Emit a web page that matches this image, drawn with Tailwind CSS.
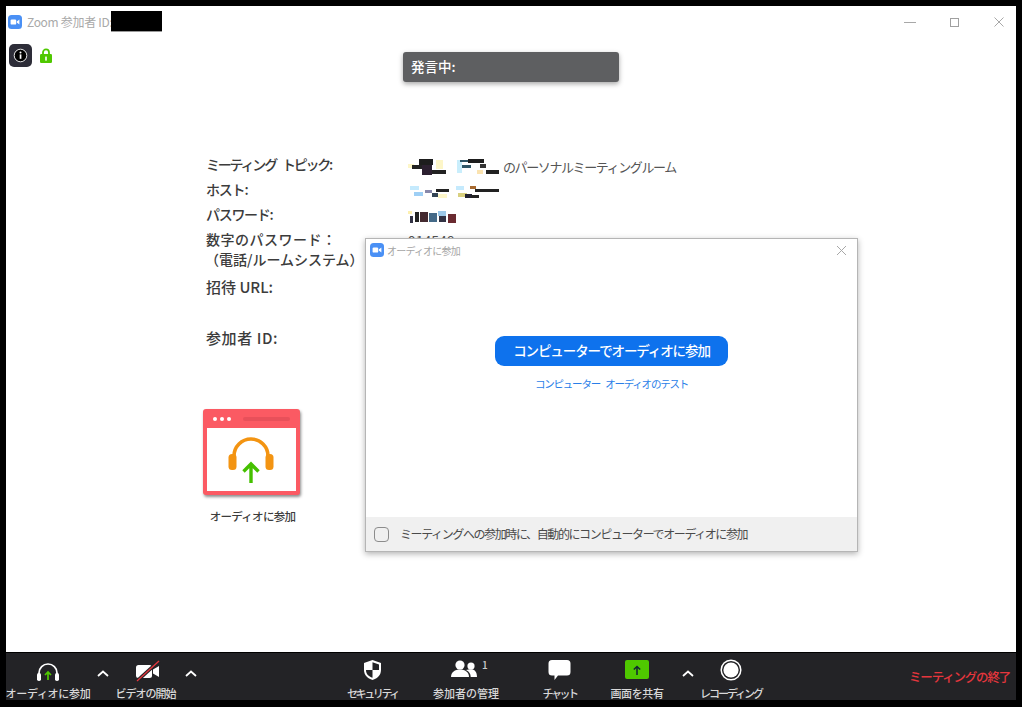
<!DOCTYPE html>
<html lang="ja">
<head>
<meta charset="UTF-8">
<title>Zoom 参加者</title>
<script src="https://cdn.jsdelivr.net/npm/@tailwindcss/browser@4"></script>
</head>
<body class="bg-black w-[1022px] h-[707px] overflow-hidden font-['Noto_Sans_CJK_JP','Noto_Sans',sans-serif]">
<div class="relative pt-[6px] px-[6px] pb-[7px] h-[707px] flex flex-col">

  <!-- main window -->
  <div class="bg-white h-[646px] shrink-0 flex flex-col">
    <!-- title bar -->
    <div class="h-[32px] shrink-0 flex items-center pl-[2px] pr-[11px]">
      <svg class="w-[14px] h-[14px] mr-[5px]" viewBox="0 0 14 14"><rect width="14" height="14" rx="3.5" fill="#4a90f5"/><rect x="2.6" y="4.4" width="5.6" height="5.2" rx="1.2" fill="#fff"/><path d="M8.8 6.4 11.4 4.6V9.4L8.8 7.6Z" fill="#fff"/></svg>
      <span class="text-[12px] tracking-[-0.3px] text-[#a9a9a9] w-[83px] whitespace-nowrap">Zoom 参加者 ID:</span>
      <span class="w-[51px] h-[21px] bg-black ml-[1px] mt-[-1px] border-b border-[#999]"></span>
      <div class="ml-auto flex items-center gap-[34px]">
        <span class="w-[12px] h-px bg-[#a8a8a8]"></span>
        <span class="w-[9px] h-[9px] border border-[#a0a0a0]"></span>
        <svg class="w-[12px] h-[12px]" viewBox="0 0 12 12" fill="none" stroke="#a8a8a8"><path d="M1.5 1.5 10.5 10.5M10.5 1.5 1.5 10.5"/></svg>
      </div>
    </div>

    <!-- status icons -->
    <div class="flex items-center pl-[3px] gap-[8px] mt-[5px] h-[24px]">
      <div class="w-[23px] h-[23px] rounded-[5px] bg-[#2d2d38] flex items-center justify-center">
        <svg class="w-[15px] h-[15px]" viewBox="0 0 15 15"><circle cx="7.5" cy="7.5" r="6.3" fill="#000" stroke="#e8e8e8" stroke-width="1"/><rect x="6.7" y="6.4" width="1.7" height="4.4" fill="#fff"/><circle cx="7.5" cy="4.6" r="1" fill="#fff"/></svg>
      </div>
      <svg class="w-[12px] h-[15px]" viewBox="0 0 12 15"><path d="M3 7V4.4a3 3 0 0 1 6 0V7" fill="none" stroke="#4fc800" stroke-width="1.8"/><rect y="6" width="12" height="9" rx="1.2" fill="#4fc800"/><rect x="5" y="8.6" width="2" height="4" fill="#dff5cf"/></svg>
    </div>

    <!-- meeting info -->
    <div class="mt-[87px] ml-[200px] grid grid-cols-[202px_1fr] text-[14px] leading-[20px] text-[#3c3c3c] whitespace-nowrap">
      <div class="font-medium h-[25px] tracking-[-2.2px] [word-spacing:5px]">ミーティング トピック:</div>
      <div class="flex items-center h-[25px] gap-[3px]">
        <svg class="w-[92px] h-[16px] blur-[0.4px]" viewBox="0 0 92 16">
          <rect x="0" y="5" width="6" height="4" fill="#fdf6c8"/><rect x="4" y="6" width="10" height="4" fill="#222"/><rect x="11" y="0" width="14" height="6" fill="#1d1d1d"/><rect x="14" y="6" width="10" height="10" fill="#2c2030"/><rect x="24" y="11" width="14" height="4" fill="#222"/><rect x="28" y="1" width="7" height="9" fill="#fdf6c8"/>
          <rect x="49" y="1" width="5" height="13" fill="#c9eefc"/><rect x="52" y="1" width="8" height="2" fill="#2d5566"/><rect x="54" y="6" width="9" height="3" fill="#2d5566"/><rect x="60" y="0" width="16" height="4" fill="#1d1d1d"/><rect x="72" y="5" width="6" height="4" fill="#333"/><rect x="78" y="11" width="13" height="4" fill="#222"/><rect x="69" y="11" width="6" height="4" fill="#fbe3b0"/>
        </svg>
        <span class="text-[13px] tracking-[-1.4px] text-[#555]">のパーソナルミーティングルーム</span>
      </div>
      <div class="font-medium h-[25px] tracking-[-1.2px]">ホスト:</div>
      <div class="h-[25px] pt-[5px]">
        <svg class="w-[92px] h-[16px] blur-[0.4px]" viewBox="0 0 92 16">
          <rect x="2" y="2" width="9" height="4" fill="#c5eafd"/><rect x="6" y="8" width="9" height="4" fill="#9ecff5"/><rect x="17" y="6" width="7" height="3" fill="#88a"/><rect x="24" y="9" width="6" height="4" fill="#345"/><rect x="28" y="5" width="13" height="3" fill="#222"/><rect x="30" y="10" width="9" height="4" fill="#fdf6c8"/><rect x="48" y="2" width="8" height="4" fill="#c5eafd"/><rect x="50" y="9" width="9" height="4" fill="#d9d080"/><rect x="57" y="10" width="7" height="4" fill="#223"/><rect x="62" y="2" width="6" height="3" fill="#a86a30"/><rect x="67" y="5" width="24" height="3" fill="#222"/><rect x="63" y="11" width="8" height="3" fill="#222"/>
        </svg>
      </div>
      <div class="font-medium h-[25px] tracking-[-1.3px]">パスワード:</div>
      <div class="h-[25px] pt-[5px]">
        <svg class="w-[50px] h-[16px] blur-[0.4px]" viewBox="0 0 50 16">
          <rect x="0" y="2" width="4" height="3" fill="#fdf0b0"/><rect x="2" y="7" width="3" height="7" fill="#334"/><rect x="7" y="3" width="4" height="10" fill="#222"/><rect x="12" y="3" width="8" height="10" fill="#442a30"/><rect x="21" y="4" width="8" height="9" fill="#456a88"/><rect x="30" y="2" width="8" height="5" fill="#9cc8e8"/><rect x="31" y="7" width="7" height="6" fill="#334"/><rect x="40" y="5" width="8" height="9" fill="#6a2a30"/>
        </svg>
      </div>
      <div class="font-medium h-[48px]"><span class="tracking-[0.5px]">数字のパスワード：</span><br><span class="-ml-[1px]">（電話/ルームシステム）</span></div>
      <div class="text-[#555] h-[48px] pt-[2px]">914548</div>
      <div class="font-medium h-[51px] text-[15px]">招待 URL:</div>
      <div class="h-[51px]"></div>
      <div class="font-medium h-[81px] text-[15px] tracking-[0.6px]">参加者 ID:</div>
      <div class="h-[81px]"></div>
    </div>

    <!-- join audio tile -->
    <div class="ml-[190px] w-[110px] flex flex-col items-center">
      <div class="w-[97px] h-[86px] rounded-[3px] bg-[#fb5a63] shadow-[1px_2px_3px_rgba(0,0,0,0.45)] flex flex-col p-[4px] pt-0">
        <div class="h-[19px] flex items-center gap-[3px] pl-[6px]">
          <span class="w-[4px] h-[4px] rounded-full bg-white"></span>
          <span class="w-[4px] h-[4px] rounded-full bg-white"></span>
          <span class="w-[4px] h-[4px] rounded-full bg-white"></span>
          <span class="ml-[9px] w-[47px] h-[4px] rounded-full bg-[#e8505a]"></span>
        </div>
        <div class="flex-1 bg-white flex justify-center items-center">
          <svg class="w-[46px] h-[48px] mt-[1px]" viewBox="0 0 46 48" fill="none">
            <path d="M6 24V20a17 17 0 0 1 34 0v4" stroke="#f39412" stroke-width="3.6"/>
            <rect x="0.5" y="18" width="8" height="16" rx="3.5" fill="#f39412"/>
            <rect x="37.5" y="18" width="8" height="16" rx="3.5" fill="#f39412"/>
            <path d="M23 47V29M15.5 35.5 23 28l7.500 7.500" stroke="#45c000" stroke-width="3.4"/>
          </svg>
        </div>
      </div>
      <div class="mt-[12px] text-[11.5px] tracking-[-0.7px] leading-[18px] font-medium text-[#3c3c3c] whitespace-nowrap ml-[3px]">オーディオに参加</div>
    </div>
  </div>

  <!-- speaking indicator -->
  <div class="absolute left-[403px] top-[52px] w-[216px] h-[30px] rounded-[3px] bg-[#5e5f61] shadow-[0_2px_5px_rgba(0,0,0,0.35)] flex items-center pl-[8px] pb-[1px] text-[13.5px] font-medium text-white">発言中:</div>

  <!-- audio dialog -->
  <div class="absolute left-[365px] top-[238px] w-[493px] h-[314px] bg-white border border-[#b5b5b5] shadow-[0_2px_6px_rgba(0,0,0,0.3)] flex flex-col whitespace-nowrap">
    <div class="h-[22px] shrink-0 flex items-center pl-[4px] pr-[10px]">
      <svg class="w-[14px] h-[14px] mr-[3px]" viewBox="0 0 14 14"><rect width="14" height="14" rx="3.5" fill="#4a90f5"/><rect x="2.6" y="4.400" width="5.6" height="5.2" rx="1.2" fill="#fff"/><path d="M8.8 6.4 11.4 4.6V9.4L8.8 7.6Z" fill="#fff"/></svg>
      <span class="text-[10px] tracking-[-0.8px] text-[#a5a5a5]">オーディオに参加</span>
      <svg class="w-[11px] h-[11px] ml-auto" viewBox="0 0 11 11" fill="none" stroke="#a8a8a8"><path d="M1 1 10 10M10 1 1 10"/></svg>
    </div>
    <div class="flex-1 flex flex-col items-center pt-[75px]">
      <div class="w-[233px] h-[30px] rounded-[9px] bg-[#0e72ed] text-white text-[13.5px] tracking-[-1.1px] font-medium flex items-center justify-center pb-[2px]">コンピューターでオーディオに参加</div>
      <div class="mt-[10px] text-[10.5px] tracking-[-1.2px] [word-spacing:4px] leading-[16px] text-[#2a7ee8]">コンピューター オーディオのテスト</div>
    </div>
    <div class="h-[34px] shrink-0 bg-[#f0f0f0] flex items-center pl-[8px] text-[12px] tracking-[-1.4px] text-[#4a4a4a]">
      <span class="w-[15px] h-[15px] rounded-[4px] border border-[#8c8c8c] mr-[11px]"></span>
      <span>ミーティングへの参加時に、自動的にコンピューターでオーディオに参加</span>
    </div>
  </div>

  <!-- toolbar -->
  <div class="h-[47px] mt-px shrink-0 bg-[#232326] relative flex text-[11px] leading-[14px] font-medium text-[#d8d8d8] whitespace-nowrap">
    <div class="w-[84px] flex flex-col items-center pt-[9px]">
      <svg class="w-[24px] h-[20px]" viewBox="0 0 24 20" fill="none"><path d="M3 15V11a9 9 0 0 1 18 0v4" stroke="#fff" stroke-width="1.700"/><rect x="1" y="11" width="4" height="8" rx="1.800" fill="#fff"/><rect x="19" y="11" width="4" height="8" rx="1.800" fill="#fff"/><path d="M12 18V10M9 13l3-3 3 3" stroke="#4fc800" stroke-width="1.700"/></svg>
      <span class="mt-[4px] tracking-[-0.3px]">オーディオに参加</span>
    </div>
    <svg class="w-[12px] h-[7px] ml-[7px] mt-[17px]" viewBox="0 0 12 7" fill="none" stroke="#fff" stroke-width="1.800"><path d="M1 6 6 1.500 11 6"/></svg>
    <div class="w-[62px] ml-[8px] flex flex-col items-center pt-[7px]">
      <svg class="w-[26px] h-[22px]" viewBox="0 0 26 22"><rect x="1" y="5" width="16" height="13" rx="2.500" fill="#fff"/><path d="M18 9.500 24 6V17l-6-3.500Z" fill="#fff"/><path d="M2 21 24 1" stroke="#232326" stroke-width="3.500"/><path d="M2 21 24 1" stroke="#e5363d" stroke-width="1.300"/></svg>
      <span class="mt-[4px] tracking-[-1px] -ml-[5px]">ビデオの開始</span>
    </div>
    <svg class="w-[12px] h-[7px] ml-[6px] mt-[17px]" viewBox="0 0 12 7" fill="none" stroke="#fff" stroke-width="1.800"><path d="M1 6 6 1.500 11 6"/></svg>

    <div class="w-[70px] ml-[140px] flex flex-col items-center pt-[6px]">
      <svg class="w-[19px] h-[22px]" viewBox="0 0 19 22"><path d="M9.500 1 18 4v7c0 5-3.500 8.500-8.500 10C4.500 19.500 1 16 1 11V4Z" fill="#fff"/><path d="M9.500 3.200V11H3c0 4 2.700 6.500 6.500 7.800V11H16V5.400Z" fill="#232326"/></svg>
      <span class="mt-[5px] tracking-[-2.4px] ml-[1px]">セキュリティ</span>
    </div>
    <div class="relative w-[80px] ml-[18px] flex flex-col items-center pt-[6px]">
      <svg class="w-[26px] h-[22px] -ml-[3px]" viewBox="0 0 26 22" fill="#fff"><circle cx="9" cy="6" r="4.600"/><path d="M0 18c0-5 4-7.500 9-7.500s9 2.500 9 7.500Z"/><circle cx="20" cy="7" r="3.600"/><path d="M15 11c1.500-.6 3-.8 5-.8 3.500 0 6 2.500 6 7.800h-6.300c0-3-1.500-5.500-4.700-7Z"/></svg>
      <span class="mt-[5px] ml-[2px]">参加者の管理</span>
      <span class="absolute left-[57px] top-[6px] text-[10px] leading-[12px] text-[#ccc]">1</span>
    </div>
    <div class="w-[50px] ml-[29px] flex flex-col items-center pt-[6px]">
      <svg class="w-[23px] h-[22px]" viewBox="0 0 23 22"><path d="M4 1H19a3.500 3.500 0 0 1 3.500 3.500V13a3.500 3.500 0 0 1-3.500 3.500H10L6.500 21V16.500H4A3.500 3.500 0 0 1 .5 13V4.500A3.500 3.500 0 0 1 4 1Z" fill="#fff"/></svg>
      <span class="mt-[5px] tracking-[-2.5px] ml-[1px]">チャット</span>
    </div>
    <div class="w-[66px] ml-[20px] flex flex-col items-center pt-[7px]">
      <span class="w-[24px] h-[19px] rounded-[2px] bg-[#4fc800] flex items-center justify-center">
        <svg class="w-[10px] h-[10px]" viewBox="0 0 10 10" fill="none" stroke="#123" stroke-width="1.500"><path d="M5 10V1.500M1.800 4.500 5 1.500l3.200 3"/></svg>
      </span>
      <span class="mt-[7px] tracking-[-0.4px]">画面を共有</span>
    </div>
    <svg class="w-[12px] h-[7px] ml-[12px] mt-[17px]" viewBox="0 0 12 7" fill="none" stroke="#fff" stroke-width="1.800"><path d="M1 6 6 1.500 11 6"/></svg>
    <div class="w-[62px] ml-[6px] flex flex-col items-center pt-[6px]">
      <svg class="w-[22px] h-[22px]" viewBox="0 0 22 22"><circle cx="11" cy="11" r="9.800" fill="none" stroke="#fff" stroke-width="1.500"/><circle cx="11" cy="11" r="7.600" fill="#fff"/></svg>
      <span class="mt-[5px] tracking-[-2px]">レコーディング</span>
    </div>
    <div class="ml-auto pr-[6px] pt-[16px] text-[12.5px] tracking-[-1.2px] leading-[16px] text-[#e5363d]">ミーティングの終了</div>
  </div>
</div>
</body>
</html>
